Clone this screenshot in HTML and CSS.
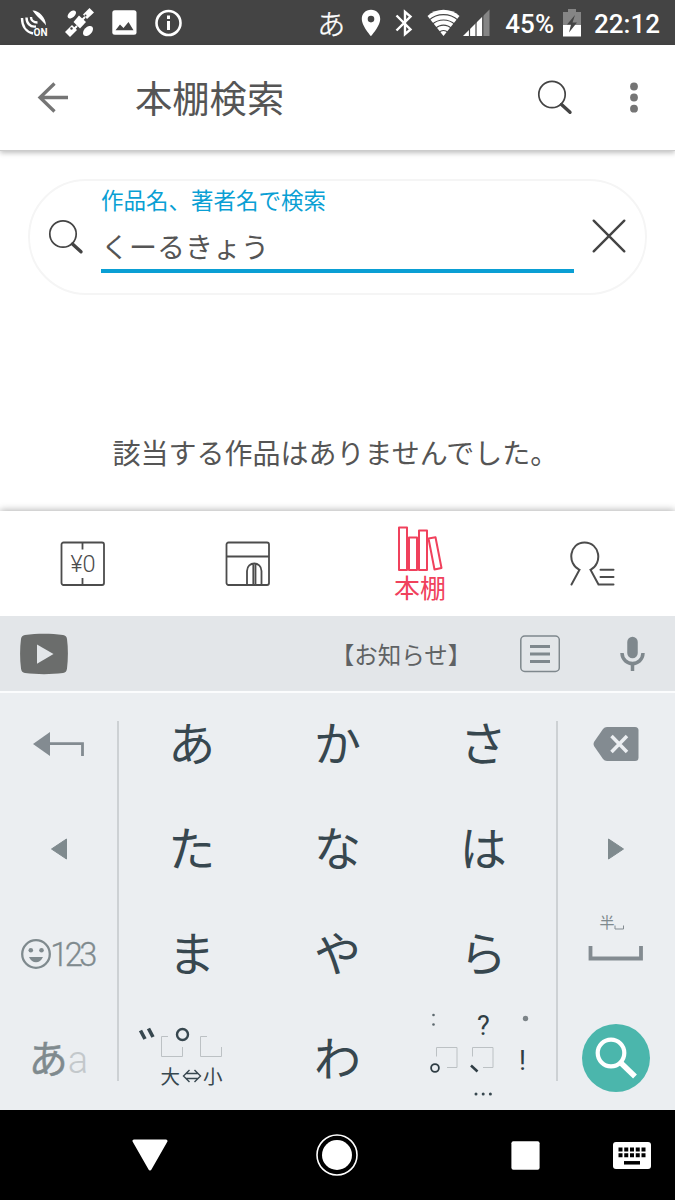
FILE: index.html
```html
<!DOCTYPE html>
<html lang="ja">
<head>
    <meta charset="UTF-8">
    <meta name="viewport" content="width=device-width, initial-scale=1.0">
    <title>本棚検索</title>
    <link rel="stylesheet" href="styles.css">
</head>
<body>
    <div class="status-bar">
        <div class="status-left">
            <svg width="28" height="28" viewBox="20 9 28 28" fill="none" stroke="#fff" stroke-width="2.400">
                <path d="M32.500 10.500C38 10 46 17 46 25.500C43 21 37 17 32.500 10.500Z" fill="#fff" stroke="none"/>
                <path d="M22 18C22 26 26 32 33 33.500M26.500 17.500C26.500 23 30 27.500 36 26.500M31 17C31 20 33.500 22.500 37.500 22.500"/>
                <text x="33.500" y="35.500" class="on-text">ON</text>
            </svg>
            <svg width="30" height="30" viewBox="64 8 30 30" fill="#fff">
                <path d="M78 15.500L85 22L79 28.500L72.500 22Z"/>
                <path d="M88.500 8L93 12.500L86 19L82 14.500Z"/>
                <path d="M64 32L71 25L76 30L69 37Z"/>
                <ellipse cx="70.800" cy="14.500" rx="5" ry="3" transform="rotate(-42 70.800 14.500)"/>
                <ellipse cx="87" cy="31" rx="6" ry="3.800" transform="rotate(-45 87 31)"/>
                <path d="M81 20L84 17M76 26L73 29" stroke="#fff" stroke-width="2"/>
                <circle cx="70.500" cy="28.500" r="1.200" fill="#444"/>
                <circle cx="84.500" cy="15.500" r="1" fill="#444"/>
            </svg>
            <svg width="25" height="25" viewBox="0 0 25 25">
                <rect x=".3" y=".3" width="24.200" height="24.500" rx="2.500" fill="#fff"/>
                <path d="M3.500 20.300L8 14.500L11.500 18L16.500 12L21.500 20.300Z" fill="#444"/>
            </svg>
            <svg width="28" height="28" viewBox="0 0 28 28">
                <circle cx="14.500" cy="14" r="12" fill="none" stroke="#fff" stroke-width="2.600"/>
                <path d="M14.500 6.500V10M14.500 12V21" stroke="#fff" stroke-width="3"/>
            </svg>
        </div>
        <div class="status-right">
            <span class="ime">あ</span>
            <svg class="pin" width="20" height="28" viewBox="0 0 20 28">
                <path d="M10 .8C4.500 .8 .8 4.800 .8 10C.8 17 10 27.200 10 27.200S19.200 17 19.200 10C19.200 4.800 15.500 .8 10 .8ZM10 6.800A3.300 3.300 0 1 1 10 13.400A3.300 3.300 0 1 1 10 6.800Z" fill="#fff"/>
            </svg>
            <svg class="bt" width="18" height="28" viewBox="0 0 18 28" fill="none" stroke="#fff" stroke-width="2.400">
                <path d="M1.500 6.500L15.500 20.500L10 25.200V2.800L15.500 7.500L1.500 21.500"/>
            </svg>
            <svg class="wifi" width="33" height="28" viewBox="0 0 33 28">
                <path d="M.5 7C9 -1.200 24 -1.200 32.500 7L16.500 27Z" fill="#fff"/>
                <path d="M2 11.200C10 3.800 23 3.800 31 11.200M5 15.500C11.500 9.500 21.500 9.500 28 15.500M8.500 19.600C13 15 20 15 24.500 19.600M12 23.500C14.500 20.800 18.500 20.800 21 23.500" fill="none" stroke="#444" stroke-width="1.100"/>
            </svg>
            <svg class="signal" width="27" height="28" viewBox="0 0 27 28">
                <path d="M19.500 7.500L26.500 .5V27H19.500Z" fill="#858585"/>
                <path d="M0 27L19.500 7.500V27Z" fill="#fff"/>
                <path d="M6.500 18V28M13 12V28M19.800 6V28" stroke="#444" stroke-width="1.200"/>
            </svg>
            <span class="battery-text">45%</span>
            <svg class="battery" width="18" height="28" viewBox="0 0 18 28">
                <path d="M0 3H5V0H13V3H18V16H0Z" fill="#858585"/>
                <path d="M0 16H18V27.500H0Z" fill="#fff"/>
                <path d="M12 6L4 15.500H8L6 23.500L14 13.500H9.500Z" fill="#444"/>
            </svg>
            <span class="clock">22:12</span>
        </div>
    </div>

    <header class="app-bar">
        <svg class="back" width="32" height="32" viewBox="0 0 32 32" fill="none" stroke="#757575" stroke-width="3.300">
            <path d="M32 16.500H4M18.500 2.500L4 16.500L18.500 30.500"/>
        </svg>
        <h1>本棚検索</h1>
        <svg width="36" height="36" viewBox="0 0 36 36" fill="none" stroke="#444">
            <circle cx="15" cy="15.500" r="13.200" stroke-width="1.700"/>
            <path d="M24.500 25.500L33 33.300" stroke-width="3.400" stroke-linecap="round"/>
        </svg>
        <svg class="more" width="10" height="32" viewBox="0 0 10 32" fill="#757575">
            <circle cx="5" cy="5.500" r="3.900"/>
            <circle cx="5" cy="16.500" r="3.900"/>
            <circle cx="5" cy="27.700" r="3.900"/>
        </svg>
    </header>

    <main class="content">
        <div class="search-box">
            <svg class="glass" width="36" height="36" viewBox="0 0 36 36" fill="none" stroke="#444">
                <circle cx="15" cy="15" r="13.200" stroke-width="1.700"/>
                <path d="M24.500 25L33 32.800" stroke-width="3.400" stroke-linecap="round"/>
            </svg>
            <div class="field">
                <div class="field-label">作品名、著者名で検索</div>
                <div class="field-value">くーるきょう</div>
            </div>
            <svg class="clear" width="34" height="34" viewBox="0 0 34 34" stroke="#444" stroke-width="2.400" stroke-linecap="round">
                <path d="M1.700 1.700L32.300 32.300M32.300 1.700L1.700 32.300"/>
            </svg>
        </div>
        <p class="message">該当する作品はありませんでした。</p>
    </main>

    <nav class="tabs">
        <div class="tab">
            <svg width="46" height="46" viewBox="0 0 46 46" fill="none" stroke="#4c4c4c" stroke-width="1.800">
                <rect x="1.500" y="1.500" width="42.500" height="42.500" rx="2"/>
                <path d="M22.500 1.500V8.500M22.500 37V44"/>
                <text x="23" y="31" class="yen">¥0</text>
            </svg>
        </div>
        <div class="tab">
            <svg width="46" height="46" viewBox="0 0 46 46" fill="none" stroke="#4c4c4c" stroke-width="1.800">
                <rect x="1.500" y="1.500" width="42.500" height="42.500" rx="2"/>
                <path d="M1.500 15.500H44M22 44V30C22 20 36.500 20 36.500 30V44M28.300 44V23M30.500 44V23"/>
            </svg>
        </div>
        <div class="tab active">
            <svg width="46" height="46" viewBox="0 0 46 46" fill="none" stroke="#f0415c" stroke-width="2" stroke-linejoin="round">
                <rect x="2" y="1.500" width="8" height="42.500"/>
                <rect x="12" y="11.500" width="8" height="32.500"/>
                <rect x="22" y="4.500" width="8" height="39.500"/>
                <path d="M31.500 12.500L38.500 11.200L44.500 42L37.500 43.500Z"/>
            </svg>
            <span>本棚</span>
        </div>
        <div class="tab">
            <svg width="46" height="46" viewBox="1 0 46 46" fill="none" stroke="#4c4c4c" stroke-width="2" stroke-linecap="round">
                <path d="M2.500 43.500L10.500 28.800C-2.500 22.500 .5 1.500 15.500 1.500C31 1.500 34 22.500 21.500 28.800L29.500 43.500H44.500M31.500 28.700H44.500M31.500 36H44.500"/>
            </svg>
        </div>
    </nav>

    <div class="suggest-bar">
        <svg class="play" width="50" height="42" viewBox="0 0 50 42">
            <path d="M6 2C18 .3 32 .3 44 2C46.500 2.300 47.500 3.500 48 6C49.200 15 49.200 26 48 35.500C47.500 38.500 46.500 39.500 44 40C32 41.500 18 41.500 6 40C3.500 39.500 2.500 38.500 2 35.500C.8 26 .8 15 2 6C2.500 3.500 3.500 2.300 6 2Z" fill="#6b6d6c"/>
            <path d="M18 11.500L34.500 21L18 30.800Z" fill="#e3e6e9"/>
        </svg>
        <span class="candidate">【お知らせ】</span>
        <svg class="list" width="40" height="38" viewBox="0 0 40 38" fill="none" stroke="#7f888d">
            <rect x=".8" y="1" width="38.500" height="35.500" rx="4" stroke-width="1.500"/>
            <path d="M10 11.500H30M10 19H30M10 26.500H30" stroke-width="3"/>
        </svg>
        <svg class="mic" width="25" height="36" viewBox="0 0 25 36" fill="none" stroke="#7f888d">
            <path d="M12.500 6V17" stroke-width="10.500" stroke-linecap="round"/>
            <path d="M2 17C2.500 31 22.500 31 23 17M12.500 27V35" stroke-width="3.500"/>
        </svg>
    </div>

    <div class="keyboard">
        <div class="side">
            <div class="key">
                <svg width="52" height="28" viewBox="0 0 52 28">
                    <path d="M0 13L17 1V25Z" fill="#838b91"/>
                    <path d="M16 12.700H49.500V25" fill="none" stroke="#838b91" stroke-width="2.800"/>
                </svg>
            </div>
            <div class="key">
                <svg width="18" height="22" viewBox="0 0 18 22">
                    <path d="M1.500 11L16.500 1V21Z" fill="#7f8a8e" stroke="#7f8a8e" stroke-linejoin="round"/>
                </svg>
            </div>
            <div class="key">
                <svg width="30" height="30" viewBox="0 0 30 30">
                    <circle cx="15" cy="15" r="13.800" fill="none" stroke="#7f8a8e" stroke-width="2.300"/>
                    <path d="M8 18H22C19 25 11 25 8 18Z" fill="#7f8a8e"/>
                    <circle cx="9.800" cy="11.300" r="2.300" fill="#7f8a8e"/>
                    <circle cx="20.500" cy="11.300" r="2.300" fill="#7f8a8e"/>
                </svg>
                <span class="digits">123</span>
            </div>
            <div class="key mode">
                <span class="mode-on">あ</span><span class="mode-off">a</span>
            </div>
        </div>
        <div class="divider"></div>
        <div class="kana">
            <div class="key letter">あ</div>
            <div class="key letter">か</div>
            <div class="key letter">さ</div>
            <div class="key letter">た</div>
            <div class="key letter">な</div>
            <div class="key letter">は</div>
            <div class="key letter">ま</div>
            <div class="key letter">や</div>
            <div class="key letter">ら</div>
            <div class="key">
                <!-- dakuten / small kana toggle -->
                <svg width="120" height="90" viewBox="12 4 120 90" fill="none">
                    <path d="M20.500 20.500L25 29M28.500 18.500L33 27" stroke="#37474f" stroke-width="3.600"/>
                    <path d="M48 26.500H41.500V46.500H62.500V37M87 26.500H80.500V46.500H101.500V37" stroke="#bcc1c4" stroke-width="1"/>
                    <circle cx="62.500" cy="24.500" r="5.500" stroke="#37474f" stroke-width="2.400"/>
                    <path d="M69.500 60L63.500 66L69.500 72M74.500 60L80.500 66L74.500 72M66 63.500H78M66 68.500H78" stroke="#37474f" stroke-width="1.400"/>
                    <text x="40.500" y="73.500" class="size-text">大</text>
                    <text x="83" y="73.500" class="size-text">小</text>
                </svg>
            </div>
            <div class="key letter">わ</div>
            <div class="key">
                <!-- punctuation -->
                <svg width="120" height="104" viewBox="0 2 120 104" fill="none">
                    <path d="M13.500 51.500V42.500H34V62.500H24M49.500 51.500V42.500H70V62.500H60" stroke="#bcc1c4" stroke-width="1"/>
                    <circle cx="10.500" cy="10" r="1.300" fill="#5c686e"/>
                    <circle cx="10.500" cy="19.500" r="1.300" fill="#5c686e"/>
                    <circle cx="102.500" cy="13.500" r="2.700" fill="#7c8488"/>
                    <circle cx="12" cy="63" r="3.900" stroke="#2f3d44" stroke-width="1.800"/>
                    <path d="M48 60.500L54.500 66.500" stroke="#2f3d44" stroke-width="2.500"/>
                    <text x="60.500" y="30" class="punct">?</text>
                    <text x="99.500" y="65" class="punct">!</text>
                    <circle cx="53" cy="89" r="1.500" fill="#37474f"/>
                    <circle cx="60.200" cy="89" r="1.500" fill="#37474f"/>
                    <circle cx="67.400" cy="89" r="1.500" fill="#37474f"/>
                </svg>
            </div>
        </div>
        <div class="divider"></div>
        <div class="side right">
            <div class="key">
                <svg width="46" height="38" viewBox="0 0 46 38">
                    <path d="M14 1H42Q45.500 1 45.500 4.500V31.500Q45.500 35 42 35H14Q11.500 35 10 33L1 20Q0 18 1 16L10 3Q11.500 1 14 1Z" fill="#838b91"/>
                    <path d="M18.500 10L34 26M34 10L18.500 26" stroke="#ebeef1" stroke-width="3.500"/>
                </svg>
            </div>
            <div class="key">
                <svg width="18" height="22" viewBox="0 0 18 22">
                    <path d="M16.500 11L1.500 1V21Z" fill="#7f8a8e" stroke="#7f8a8e" stroke-linejoin="round"/>
                </svg>
            </div>
            <div class="key">
                <svg width="56" height="92" viewBox="0 -4 56 92" fill="none" stroke="#838b91">
                    <text x="11.500" y="15.500" class="half">半</text>
                    <path d="M27 13.500V17H35.500V13.500" stroke-width="1"/>
                    <path d="M2.500 34V46.500H53V34" stroke-width="3.800"/>
                </svg>
            </div>
            <div class="key">
                <div class="go">
                    <svg width="42" height="42" viewBox="0 0 42 42" fill="none" stroke="#fff">
                        <circle cx="16" cy="16" r="13.300" stroke-width="4.200"/>
                        <path d="M26.500 26.500L40 39.500" stroke-width="5.500"/>
                    </svg>
                </div>
            </div>
        </div>
    </div>

    <div class="nav-bar">
        <svg class="nav-back" width="36" height="32" viewBox="0 0 36 32">
            <path d="M2 2H34L18 30Z" fill="#fff" stroke="#fff" stroke-width="3" stroke-linejoin="round"/>
        </svg>
        <svg class="nav-home" width="42" height="42" viewBox="0 0 42 42">
            <circle cx="21" cy="21" r="20" fill="none" stroke="#fff" stroke-width="1.600"/>
            <circle cx="21" cy="21" r="15" fill="#fff"/>
        </svg>
        <svg class="nav-recent" width="29" height="29" viewBox="0 0 29 29">
            <rect x=".4" y=".3" width="28.200" height="28.400" rx="2" fill="#fff"/>
        </svg>
        <svg class="nav-ime" width="38" height="27" viewBox="0 0 38 27">
            <rect width="38" height="27" rx="3" fill="#fff"/>
            <path d="M5.500 7.500H32.500M5.500 13.200H32.500" stroke="#000" stroke-width="4" stroke-dasharray="4 1.750"/>
            <path d="M11 20.800H27" stroke="#000" stroke-width="3.500"/>
        </svg>
    </div>
</body>
</html>
```

FILE: styles.css
```css
* {
    box-sizing: border-box;
}
body {
    font-family: Roboto, "Noto Sans CJK JP", sans-serif;
    margin: 0;
    width: 675px;
    height: 1200px;
    display: flex;
    flex-direction: column;
    background: #fff;
    overflow: hidden;
}
svg {
    display: block;
    flex-shrink: 0;
}
.status-bar {
    height: 45px;
    background: #444;
    color: #fff;
    display: flex;
    align-items: center;
    justify-content: space-between;
    padding: 0 15px 0 20px;
    flex-shrink: 0;
}
.status-left {
    display: flex;
    align-items: center;
    gap: 17px;
}
.status-right {
    display: flex;
    align-items: center;
    font-size: 26px;
    font-weight: 500;
}
.on-text {
    font: 700 10px Roboto, sans-serif;
    fill: #fff;
    stroke: none;
}
.ime {
    font-size: 28px;
    font-weight: 300;
    line-height: 38px;
    padding-top: 7px;
    -webkit-text-stroke: 0.4px #fff;
}
.pin {
    margin-left: 16px;
}
.bt {
    margin-left: 14px;
}
.wifi {
    margin-left: 14px;
}
.signal {
    margin-left: 3px;
}
.battery-text {
    margin-left: 15px;
}
.battery {
    margin-left: 9px;
}
.clock {
    margin-left: 13px;
}
.battery-text,
.clock {
    padding-top: 2px;
}
.app-bar {
    height: 106px;
    display: flex;
    align-items: center;
    padding: 0 36px 1px;
    background: #fff;
    border-bottom: 1px solid #ccc;
    box-shadow: 0 2px 5px rgba(0, 0, 0, 0.25);
    flex-shrink: 0;
    z-index: 1;
}
.app-bar h1 {
    margin: 0 auto 0 67px;
    padding-top: 6px;
    font-size: 37.3px;
    font-weight: 400;
    line-height: 50px;
    color: #555;
}
.more {
    margin-left: 56px;
}
.content {
    height: 360px;
    padding: 28px 28px 0;
    flex-shrink: 0;
}
.search-box {
    height: 116px;
    border: 2px solid #f5f5f5;
    border-radius: 58px;
    display: flex;
    padding: 0 18px;
}
.glass {
    margin-top: 38px;
}
.field {
    width: 473px;
    height: 92px;
    margin-left: 17px;
    border-bottom: 4px solid #0a9fd4;
}
.field-label {
    font-size: 22.5px;
    line-height: 30px;
    margin-top: 5px;
    color: #0a9fd4;
}
.field-value {
    font-size: 28px;
    line-height: 40px;
    margin-top: 13px;
    color: #555;
}
.clear {
    margin: 38px 0 0 18px;
}
.message {
    margin: 140px 4px 0 0;
    font-size: 28px;
    line-height: 40px;
    text-align: center;
    color: #555;
    white-space: nowrap;
}
.tabs {
    height: 105px;
    display: flex;
    background: #fff;
    box-shadow: 0 -1px 7px rgba(0, 0, 0, 0.3);
    flex-shrink: 0;
}
.tab {
    width: 165px;
    display: flex;
    flex-direction: column;
    align-items: center;
    justify-content: center;
}
.tab.active {
    width: 180px;
}
.tab.active span {
    height: 30px;
    font-size: 26px;
    line-height: 34px;
    color: #f0415c;
}
.yen {
    font: 300 23.5px Roboto, sans-serif;
    fill: #4c4c4c;
    stroke: none;
    text-anchor: middle;
}
.suggest-bar {
    height: 75px;
    background: #e3e6e9;
    display: flex;
    align-items: center;
    padding: 0 30px 0 19px;
    flex-shrink: 0;
    z-index: 1;
}
.candidate {
    width: 144px;
    margin-left: 260px;
    padding-top: 4px;
    font-size: 23.5px;
    line-height: 36px;
    text-align: center;
    white-space: nowrap;
    color: #5f6264;
}
.list {
    margin-left: 47px;
}
.mic {
    margin-left: 60px;
}
.keyboard {
    height: 419px;
    border-top: 2px solid #fbfcfd;
    background: #ebeef1;
    display: flex;
    flex-shrink: 0;
}
.side {
    width: 117px;
    display: grid;
    grid-template-rows: repeat(4, 1fr);
}
.side.right {
    padding-right: 1px;
}
.divider {
    width: 2px;
    margin: 28px 0 29px;
    background: #cdd1d4;
}
.kana {
    width: 437px;
    display: grid;
    grid-template-columns: repeat(3, 1fr);
    grid-template-rows: repeat(4, 105px);
    align-content: center;
    font-size: 47px;
    line-height: 60px;
    color: #37474f;
}
.key {
    min-width: 0;
    min-height: 0;
    display: flex;
    align-items: center;
    justify-content: center;
}
.letter {
    padding-top: 2px;
}
.digits {
    margin: 2px 0 0 -1px;
    font-size: 32.5px;
    letter-spacing: -3.6px;
    padding-right: 2px;
    font-weight: 300;
    color: #7f8a8e;
    -webkit-text-stroke: 0.3px #7f8a8e;
}
.mode {
    padding-top: 4px;
    line-height: 60px;
    color: #7f8a8e;
}
.mode-on {
    font-size: 39px;
    -webkit-text-stroke: 0.5px #7f8a8e;
}
.mode-off {
    font-size: 38px;
    font-weight: 300;
    color: #c3c8cb;
}
.size-text {
    font: 19.5px "Noto Sans CJK JP", sans-serif;
    fill: #37474f;
}
.punct {
    font: 27px Roboto, sans-serif;
    fill: #2f3d44;
    text-anchor: middle;
}
.half {
    font: 400 15px "Noto Sans CJK JP", sans-serif;
    fill: #7f8a8e;
    stroke: none;
}
.go {
    width: 68px;
    height: 68px;
    border-radius: 50%;
    background: #4bb6ac;
    display: flex;
    align-items: center;
    justify-content: center;
}
.nav-bar {
    height: 90px;
    background: #000;
    display: flex;
    align-items: center;
    padding-left: 132px;
    flex-shrink: 0;
}
.nav-home {
    margin-left: 148px;
}
.nav-recent {
    margin-left: 153px;
}
.nav-ime {
    margin-left: 73px;
}
```
